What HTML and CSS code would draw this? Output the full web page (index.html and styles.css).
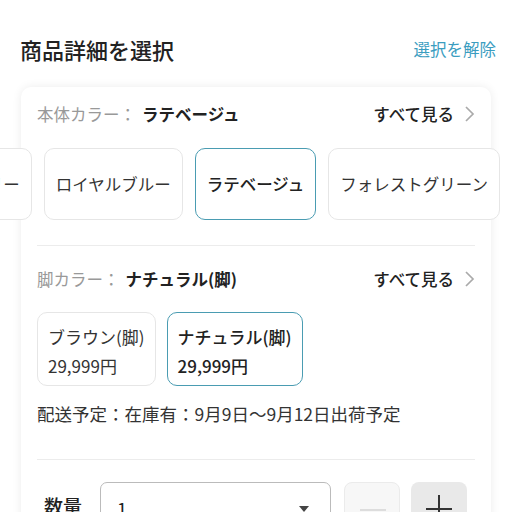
FILE: index.html
```html
<!DOCTYPE html>
<html lang="ja">
<head>
<meta charset="utf-8">
<link rel="stylesheet" href="styles.css">
</head>
<body>
<div class="page">
  <header class="header">
    <h1 class="title">商品詳細を選択</h1>
    <a class="clear">選択を解除</a>
  </header>
  <section class="card">
    <div class="row">
      <div class="label"><span class="key">本体カラー</span><span class="colon">：</span><span class="val">ラテベージュ</span></div>
      <div class="more">すべて見る<svg class="chev" width="11" height="18" viewBox="0 0 11 18"><path d="M2 2 L9 9 L2 16" fill="none" stroke="#aaa" stroke-width="1.7"/></svg></div>
    </div>
    <div class="scroller">
      <div class="chips">
        <div class="chip first">アイボリー</div>
        <div class="chip">ロイヤルブルー</div>
        <div class="chip selected">ラテベージュ</div>
        <div class="chip">フォレストグリーン</div>
        <div class="chip">ネイビー</div>
      </div>
    </div>
    <hr class="divider d1">
    <div class="row row2">
      <div class="label"><span class="key">脚カラー</span><span class="colon">：</span><span class="val">ナチュラル(脚)</span></div>
      <div class="more">すべて見る<svg class="chev" width="11" height="18" viewBox="0 0 11 18"><path d="M2 2 L9 9 L2 16" fill="none" stroke="#aaa" stroke-width="1.7"/></svg></div>
    </div>
    <div class="legs">
      <div class="leg"><div>ブラウン(脚)</div><div>29,999円</div></div>
      <div class="leg selected"><div>ナチュラル(脚)</div><div>29,999円</div></div>
    </div>
    <p class="ship">配送予定：在庫有：9月9日～9月12日出荷予定</p>
    <hr class="divider d2">
    <div class="qty">
      <span class="qlabel">数量</span>
      <div class="select"><span>1</span><svg width="12" height="8" viewBox="0 0 12 8"><path d="M1 1 L11 1 L6 7 Z" fill="#444"/></svg></div>
      <div class="btn minus"><span class="bar"></span></div>
      <div class="btn plus"><span class="bar"></span><span class="bar v"></span></div>
    </div>
  </section>
</div>
</body>
</html>
```
FILE: styles.css
```css
* { box-sizing: border-box; }
html, body { margin: 0; padding: 0; background: #fff; }
body {
  font-family: "Noto Sans CJK JP", "Noto Sans", sans-serif;
  color: #222;
  overflow: hidden;
  width: 512px;
  height: 512px;
}
.page { width: 512px; }
.header {
  display: flex;
  justify-content: space-between;
  align-items: center;
  padding: 31px 16px 0 20px;
  height: 66px;
}
.title {
  margin: 0;
  font-size: 22px;
  font-weight: 500;
  line-height: 32px;
  color: #222;
}
.clear {
  font-size: 16.5px;
  color: #3b9dbf;
  line-height: 32px;
}
.card {
  margin: 21px 21px 0 21px;
  background: #fff;
  border-radius: 10px;
  box-shadow: 0 0 10px rgba(0,0,0,0.08);
  padding: 16px 16px 40px;
  height: 480px;
}
.row {
  display: flex;
  justify-content: space-between;
  align-items: center;
  height: 22px;
  font-size: 16.5px;
}
.key { color: #999; }
.colon { color: #999; margin: 0 6px 0 0; }
.val { color: #222; font-weight: 700; }
.more { display: flex; align-items: center; color: #222; font-weight: 500; }
.chev { margin-left: 10px; margin-right: 0; }
.scroller {
  margin: 23px -37px 0 -37px;
  overflow: hidden;
  width: 512px;
}
.chips {
  display: flex;
  gap: 12px;
  margin-left: -74px;
}
.chip {
  flex: none;
  height: 72px;
  padding: 0 11px;
  border: 1px solid #e6e6e6;
  border-radius: 10px;
  display: flex;
  align-items: center;
  justify-content: center;
  font-size: 16.5px;
  color: #333;
  background: #fff;
}
.chip.selected {
  border: 1.5px solid #4a9cb2;
  color: #222;
  font-weight: 500;
}
.divider {
  border: 0;
  border-top: 1px solid #ececec;
  margin: 0;
}
.d1 { margin-top: 25px; }
.row2 { margin-top: 22px; }
.legs {
  display: flex;
  gap: 11px;
  margin-top: 22px;
}
.leg {
  height: 74px;
  border: 1px solid #e6e6e6;
  border-radius: 10px;
  padding: 9px 10px 0 10px;
  font-size: 17px;
  line-height: 29px;
  color: #333;
}
.leg.selected {
  border: 1.5px solid #4a9cb2;
  color: #222;
  font-weight: 500;
}
.ship {
  margin: 17px 0 0;
  font-size: 17.5px;
  line-height: 22px;
  color: #333;
}
.d2 { margin-top: 34px; }
.qty {
  display: flex;
  align-items: flex-start;
  margin-top: 22px;
}
.qlabel {
  font-size: 19px;
  font-weight: 500;
  margin: 12px 0 0 7px;
  width: 56px;
  line-height: 24px;
}
.select {
  width: 231px;
  height: 46px;
  border: 1px solid #bbb;
  border-radius: 7px;
  display: flex;
  align-items: center;
  justify-content: space-between;
  padding: 8px 20px 0 16px;
  font-size: 18px;
  color: #222;
}
.btn {
  width: 56px;
  height: 46px;
  border-radius: 8px;
  position: relative;
}
.minus { margin-left: 13px; background: #f7f7f7; border: 1px solid #ebebeb; }
.plus { margin-left: 11px; background: #e9e9e9; }
.bar {
  position: absolute;
  left: 15px;
  top: 26px;
  width: 26px;
  height: 2px;
  background: #ddd;
}
.plus .bar { background: #333; left: 15px; }
.plus .bar.v { width: 2px; height: 26px; left: 27px; top: 13px; }
```
